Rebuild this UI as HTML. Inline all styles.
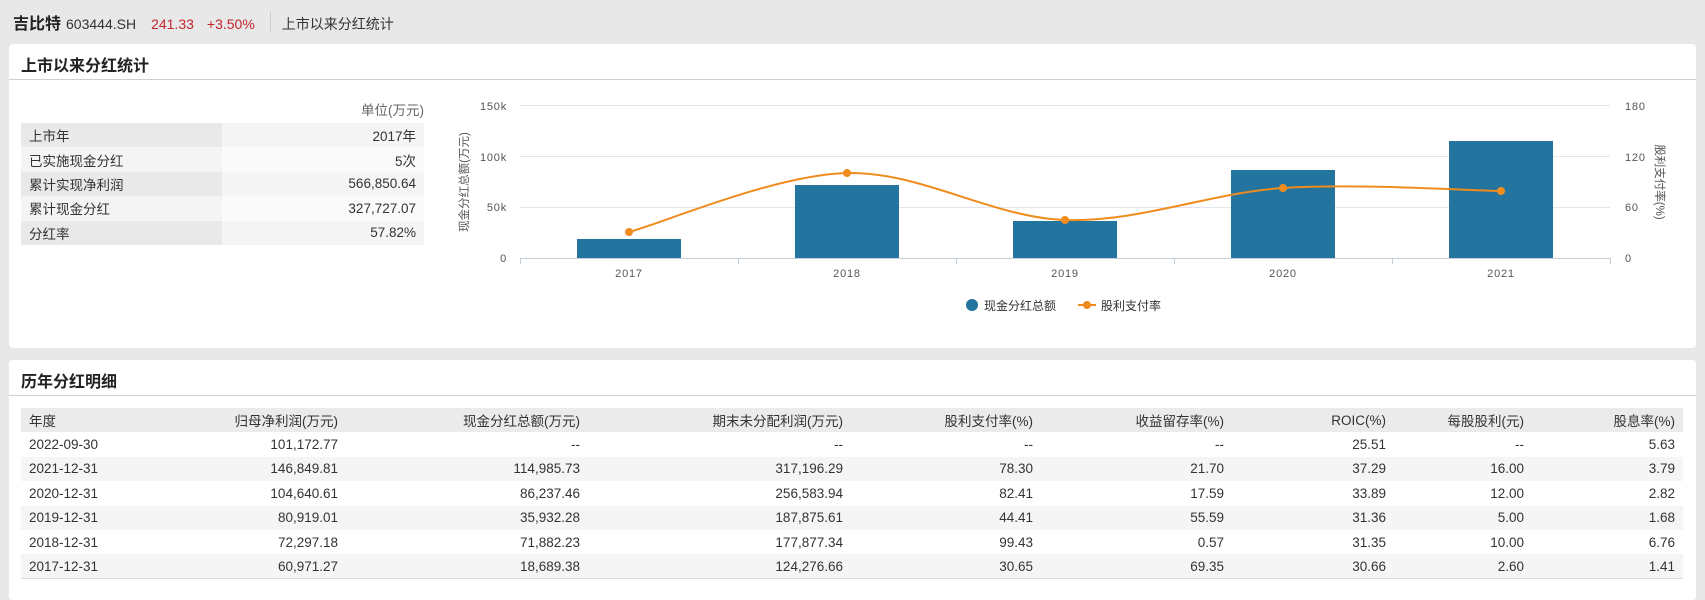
<!DOCTYPE html>
<html><head><meta charset="utf-8"><style>
*{margin:0;padding:0;box-sizing:border-box}
body{width:1705px;height:589px;background:#e8e8e8;font-family:"Liberation Sans","Noto Sans CJK SC",sans-serif;color:#333;position:relative;overflow:hidden}
.a{position:absolute;white-space:nowrap}
.panel{position:absolute;background:#fff;border-radius:4px}
.title{position:absolute;left:12px;font-size:16px;font-weight:bold;color:#222}
.sep{position:absolute;left:0;right:0;height:1px;background:#cfcfcf}
table{border-collapse:collapse;font-size:13.5px;color:#333}
td,th{height:24.4px;padding:0 8px;font-weight:normal}
.hd{position:absolute;left:13px;top:10px;height:24px;display:flex;align-items:baseline;white-space:nowrap}
</style></head><body>
<div class="hd">
<span style="font-size:16px;font-weight:bold;color:#222">吉比特</span>
<span style="font-size:14px;color:#333;margin-left:5px">603444.SH</span>
<span style="font-size:14px;color:#c1272d;margin-left:15px">241.33</span>
<span style="font-size:14px;color:#c1272d;margin-left:13px">+3.50%</span>
<span style="display:inline-block;width:1px;height:20px;background:#ccc;margin-left:15px;align-self:center"></span>
<span style="font-size:14px;color:#333;margin-left:11px">上市以来分红统计</span>
</div>

<div class="panel" style="left:9px;top:44px;width:1687px;height:304px">
<div class="title" style="top:8px">上市以来分红统计</div>
<div class="sep" style="top:35px"></div>
</div>
<div class="a" style="left:340px;top:99px;font-size:13.5px;color:#666;width:84px;text-align:right">单位(万元)</div>
<table class="a" style="left:21px;top:123px;width:403px">
<tr><td style="background:#e9e9e9;width:201px">上市年</td><td style="background:#f5f5f5;text-align:right">2017年</td></tr>
<tr><td style="background:#f4f4f4">已实施现金分红</td><td style="background:#fafafa;text-align:right">5次</td></tr>
<tr><td style="background:#e9e9e9">累计实现净利润</td><td style="background:#f5f5f5;text-align:right">566,850.64</td></tr>
<tr><td style="background:#f4f4f4">累计现金分红</td><td style="background:#fafafa;text-align:right">327,727.07</td></tr>
<tr><td style="background:#e9e9e9">分红率</td><td style="background:#f5f5f5;text-align:right">57.82%</td></tr>
</table>

<svg class="a" style="left:0;top:0" width="1705" height="348" font-family="Liberation Sans, Noto Sans CJK SC, sans-serif">
<g stroke="#e3e6ec" stroke-width="1">
<line x1="520" y1="105.5" x2="1610" y2="105.5"/><line x1="520" y1="156.5" x2="1610" y2="156.5"/><line x1="520" y1="207.5" x2="1610" y2="207.5"/>
</g>
<g fill="#23749f">
<rect x="577" y="239" width="104" height="19"/>
<rect x="795" y="185" width="104" height="73"/>
<rect x="1013" y="221" width="104" height="37"/>
<rect x="1231" y="170" width="104" height="88"/>
<rect x="1449" y="141" width="104" height="117"/>
</g>
<g stroke="#c5cdd9" stroke-width="1">
<line x1="520" y1="258.5" x2="1610" y2="258.5"/>
<line x1="520.5" y1="258" x2="520.5" y2="264"/><line x1="738.5" y1="258" x2="738.5" y2="264"/><line x1="956.5" y1="258" x2="956.5" y2="264"/><line x1="1174.5" y1="258" x2="1174.5" y2="264"/><line x1="1392.5" y1="258" x2="1392.5" y2="264"/><line x1="1610.5" y1="258" x2="1610.5" y2="264"/>
</g>
<path d="M629,232 C665.3,222.2 774.3,175 847,173 C919.7,171 992.3,217.5 1065,220 C1137.7,222.5 1210.3,192.8 1283,188 C1355.7,183.2 1464.7,190.5 1501,191" fill="none" stroke="#f08c1e" stroke-width="2"/>
<g fill="#f08c1e"><circle cx="629" cy="232" r="4"/><circle cx="847" cy="173" r="4"/><circle cx="1065" cy="220" r="4"/><circle cx="1283" cy="188" r="4"/><circle cx="1501" cy="191" r="4"/></g>
<g font-size="11" fill="#555" text-anchor="end" letter-spacing="0.8">
<text x="507" y="110">150k</text><text x="507" y="161">100k</text><text x="507" y="211">50k</text><text x="507" y="262">0</text>
</g>
<g font-size="11" fill="#555" letter-spacing="0.8">
<text x="1625" y="110">180</text><text x="1625" y="161">120</text><text x="1625" y="211">60</text><text x="1625" y="262">0</text>
</g>
<g font-size="11" fill="#555" text-anchor="middle" letter-spacing="0.8">
<text x="629" y="277">2017</text><text x="847" y="277">2018</text><text x="1065" y="277">2019</text><text x="1283" y="277">2020</text><text x="1501" y="277">2021</text>
</g>
<text transform="translate(468,182) rotate(-90)" font-size="11.5" fill="#555" text-anchor="middle">现金分红总额(万元)</text>
<text transform="translate(1656,182) rotate(90)" font-size="11.5" fill="#555" text-anchor="middle">股利支付率(%)</text>
<circle cx="972" cy="305" r="6" fill="#23749f"/>
<text x="984" y="310" font-size="12" fill="#333">现金分红总额</text>
<line x1="1078" y1="305" x2="1096" y2="305" stroke="#f08c1e" stroke-width="2"/><circle cx="1087" cy="305" r="4" fill="#f08c1e"/>
<text x="1101" y="310" font-size="12" fill="#333">股利支付率</text>
</svg>

<div class="panel" style="left:9px;top:360px;width:1687px;height:240px">
<div class="title" style="top:8px">历年分红明细</div>
<div class="sep" style="top:35px"></div>
</div>
<table class="a" style="left:21px;top:408px;width:1662px">
<colgroup><col style="width:127px"><col style="width:198px"><col style="width:242px"><col style="width:263px"><col style="width:190px"><col style="width:191px"><col style="width:162px"><col style="width:138px"><col style="width:151px"></colgroup>
<tr style="background:#ebebeb"><th style="text-align:left">年度</th><th style="text-align:right">归母净利润(万元)</th><th style="text-align:right">现金分红总额(万元)</th><th style="text-align:right">期末未分配利润(万元)</th><th style="text-align:right">股利支付率(%)</th><th style="text-align:right">收益留存率(%)</th><th style="text-align:right">ROIC(%)</th><th style="text-align:right">每股股利(元)</th><th style="text-align:right">股息率(%)</th></tr>
<tr style="text-align:right"><td style="text-align:left">2022-09-30</td><td>101,172.77</td><td>--</td><td>--</td><td>--</td><td>--</td><td>25.51</td><td>--</td><td>5.63</td></tr>
<tr style="text-align:right;background:#f5f5f5"><td style="text-align:left">2021-12-31</td><td>146,849.81</td><td>114,985.73</td><td>317,196.29</td><td>78.30</td><td>21.70</td><td>37.29</td><td>16.00</td><td>3.79</td></tr>
<tr style="text-align:right"><td style="text-align:left">2020-12-31</td><td>104,640.61</td><td>86,237.46</td><td>256,583.94</td><td>82.41</td><td>17.59</td><td>33.89</td><td>12.00</td><td>2.82</td></tr>
<tr style="text-align:right;background:#f5f5f5"><td style="text-align:left">2019-12-31</td><td>80,919.01</td><td>35,932.28</td><td>187,875.61</td><td>44.41</td><td>55.59</td><td>31.36</td><td>5.00</td><td>1.68</td></tr>
<tr style="text-align:right"><td style="text-align:left">2018-12-31</td><td>72,297.18</td><td>71,882.23</td><td>177,877.34</td><td>99.43</td><td>0.57</td><td>31.35</td><td>10.00</td><td>6.76</td></tr>
<tr style="text-align:right;background:#f5f5f5;border-bottom:1px solid #ddd"><td style="text-align:left">2017-12-31</td><td>60,971.27</td><td>18,689.38</td><td>124,276.66</td><td>30.65</td><td>69.35</td><td>30.66</td><td>2.60</td><td>1.41</td></tr>
</table>
</body></html>
